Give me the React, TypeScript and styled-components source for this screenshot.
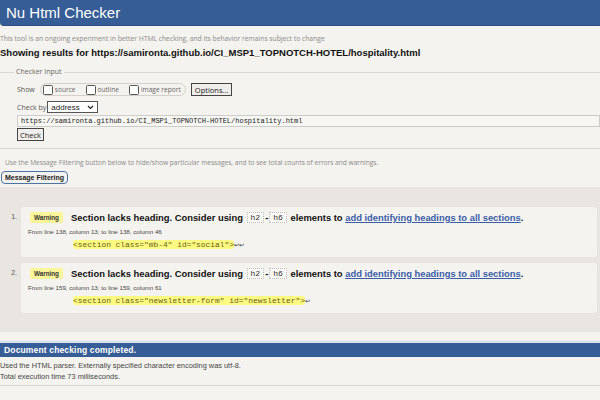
import React from "react";
import styled, { createGlobalStyle } from "styled-components";

const Global = createGlobalStyle`
  html, body { margin: 0; padding: 0; background: #f5f3ef; }
  body { font-family: "Liberation Sans", Arial, sans-serif; color: #222; }
`;

const Page = styled.div`
  width: 600px;
  height: 400px;
  overflow: hidden;
  background: #f5f3ef;
  display: flex;
  flex-direction: column;
`;

const Header = styled.h1`
  margin: 0;
  height: 26px;
  box-sizing: border-box;
  padding-left: 6px;
  background: #365d96;
  border-radius: 0 0 0 4px;
  border-bottom: 1px solid #2d4f82;
  color: #fff;
  font: normal 15px/26px "Liberation Sans", Arial, sans-serif;
`;

const Intro = styled.p`
  margin: 8px 0 0;
  font: 6.75px/10px "Open Sans", sans-serif;
  color: #8a8a8a;
  white-space: nowrap;
`;

const Showing = styled.h2`
  margin: 3px 0 0;
  font: bold 9.5px/12px "Liberation Sans", Arial, sans-serif;
  color: #111;
  white-space: nowrap;
`;

const Fieldset = styled.fieldset`
  margin: 8px 0 0;
  padding: 6px 0 7px 17px;
  border: none;
  border-top: 1px solid #dcd8d1;
  border-bottom: 1px solid #dcd8d1;
  display: flex;
  flex-direction: column;
  font: 7px "Open Sans", sans-serif;
  color: #555;
`;

const Legend = styled.legend`
  padding: 0 2px;
  margin-left: -3px;
  font: 7px/10px "Open Sans", sans-serif;
  color: #666;
`;

const Row = styled.div<{ $mt?: number }>`
  display: flex;
  align-items: center;
  margin-top: ${(p) => p.$mt ?? 0}px;
`;

const Label = styled.span`
  font: 7px "Open Sans", sans-serif;
  color: #555;
  margin-right: 5px;
`;

const Group = styled.span`
  display: flex;
  align-items: center;
  gap: 10px;
  height: 13px;
  box-sizing: border-box;
  padding: 0 4px 0 2px;
  border: 1px solid #d3d0ca;
  border-radius: 7px;
`;

const Check = styled.label`
  display: flex;
  align-items: center;
  gap: 2px;
  font: 6.6px "Open Sans", sans-serif;
  color: #666;
`;

const Box = styled.span`
  width: 8px;
  height: 8px;
  border: 1px solid #555;
  border-radius: 1.5px;
  background: #fff;
`;

const Btn = styled.span<{ $ml?: number }>`
  display: inline-flex;
  align-items: center;
  justify-content: center;
  height: 13px;
  box-sizing: border-box;
  padding: 0 3px;
  margin-left: ${(p) => p.$ml ?? 0}px;
  border: 1.5px solid #444;
  background: #f0eeea;
  font: 7.5px "Open Sans", sans-serif;
  color: #222;
`;

const Select = styled.span`
  display: inline-flex;
  align-items: center;
  justify-content: space-between;
  width: 51px;
  height: 12px;
  box-sizing: border-box;
  padding: 0 3px;
  margin-left: -4px;
  border: 1px solid #555;
  background: #fff;
  font: 8px "Liberation Sans", Arial, sans-serif;
  color: #222;
`;

const UrlInput = styled.input`
  margin-top: 2px;
  height: 12px;
  width: 100%;
  box-sizing: border-box;
  padding: 0 3px;
  border: 1px solid #ccc;
  background: #f7f6f3;
  font: 7px "Liberation Mono", monospace;
  color: #222;
  outline: none;
`;

const SmallBtn = styled(Btn)`
  align-self: flex-start;
  margin-top: 1px;
  border-width: 1px;
  padding: 0 3px;
  width: 27px;
`;

const Hint = styled.p`
  margin: 9px 0 0 5px;
  font: 6.6px/10px "Open Sans", sans-serif;
  color: #8a8a8a;
  white-space: nowrap;
`;

const FilterBtn = styled.span`
  align-self: flex-start;
  margin: 3px 0 0 1px;
  height: 13px;
  width: 67px;
  box-sizing: border-box;
  display: flex;
  align-items: center;
  justify-content: center;
  border: 1.5px solid #4a74a8;
  border-radius: 4px;
  background: #f3f1ed;
  font: bold 7px "Liberation Sans", Arial, sans-serif;
  color: #222;
`;

const Results = styled.ol`
  margin: 3px 0 0;
  padding: 20px 3px 19px 0;
  list-style: none;
  background: #e9e6e1;
  display: flex;
  flex-direction: column;
  gap: 6px;
`;

const Item = styled.li`
  display: flex;
  align-items: flex-start;
`;

const Num = styled.span`
  width: 21px;
  box-sizing: border-box;
  padding: 6px 4px 0 0;
  text-align: right;
  font: 7px "Liberation Sans", Arial, sans-serif;
  color: #555;
`;

const Card = styled.div`
  flex: 1;
  background: #f5f3ef;
  border-radius: 2px;
  box-shadow: 0 0 1px rgba(0, 0, 0, 0.15);
  padding: 3px 0 7px 7px;
  display: flex;
  flex-direction: column;
`;

const Msg = styled.p`
  margin: 0;
  display: flex;
  align-items: center;
  height: 14px;
  font: bold 9.4px "Liberation Sans", Arial, sans-serif;
  color: #111;
  white-space: pre;
`;

const Badge = styled.span`
  margin: 0 8px 0 2px;
  height: 11px;
  width: 33px;
  display: inline-flex;
  align-items: center;
  justify-content: center;
  background: #fbf59a;
  border-radius: 2px;
  font: bold 6.3px "Liberation Sans", Arial, sans-serif;
  color: #333;
`;

const Tag = styled.code`
  font: 8px "Liberation Mono", monospace;
  font-weight: normal;
  color: #333;
  border: 1px dotted #bbb;
  background: #faf9f6;
  padding: 0 3px;
  margin: 0 1px;
`;

const Link = styled.a`
  color: #3a5da8;
  text-decoration: underline;
`;

const Location = styled.p`
  margin: 3px 0 0;
  font: 6.2px/10px "Liberation Sans", Arial, sans-serif;
  color: #444;
`;

const Extract = styled.p`
  margin: 3px 0 0 45px;
  font: 7.9px/10px "Liberation Mono", monospace;
  color: #333;
  white-space: pre;
`;

const Hi = styled.b`
  font-weight: normal;
  background: #fcfa80;
  color: #6b5a1c;
  border-radius: 3px;
`;

const Ret = styled.span`
  font: 6px "DejaVu Sans", sans-serif;
  color: #333;
`;

const Done = styled.h2`
  margin: 10px 0 0;
  height: 15px;
  box-sizing: border-box;
  padding-left: 4px;
  background: #365d96;
  border-top: 1px solid #dfe8f4;
  box-shadow: 0 -1px 0 #cfdcee;
  color: #fff;
  font: bold 8.5px/14px "Liberation Sans", Arial, sans-serif;
  letter-spacing: 0.15px;
`;

const Details = styled.div`
  margin-top: 3px;
  padding-bottom: 3px;
  border-bottom: 1px solid #dcd8d1;
  background: #f4f3ef;
`;

const Note = styled.p`
  margin: 0;
  font: 7.4px/11px "Liberation Sans", Arial, sans-serif;
  color: #444;
`;

const Chevron = () => (
  <svg width="7" height="5" viewBox="0 0 7 5">
    <path d="M1 1l2.5 2.5L6 1" fill="none" stroke="#222" strokeWidth="1.2" />
  </svg>
);

const messages = [
  {
    n: 1,
    loc: "From line 138, column 13; to line 138, column 46",
    code: '<section class="mb-4" id="social">',
    ret: "↩↩",
  },
  {
    n: 2,
    loc: "From line 159, column 13; to line 159, column 61",
    code: '<section class="newsletter-form" id="newsletter">',
    ret: "↩",
  },
];

export default function App() {
  return (
    <Page>
      <Global />
      <Header>Nu Html Checker</Header>
      <Intro>
        This tool is an ongoing experiment in better HTML checking, and its behavior remains subject to change
      </Intro>
      <Showing>
        Showing results for https://samironta.github.io/CI_MSP1_TOPNOTCH-HOTEL/hospitality.html
      </Showing>
      <Fieldset>
        <Legend>Checker Input</Legend>
        <Row>
          <Label>Show</Label>
          <Group>
            <Check>
              <Box /> source
            </Check>
            <Check>
              <Box /> outline
            </Check>
            <Check>
              <Box /> image report
            </Check>
          </Group>
          <Btn $ml={5}>Options...</Btn>
        </Row>
        <Row $mt={5}>
          <Label>Check by</Label>
          <Select>
            address <Chevron />
          </Select>
        </Row>
        <UrlInput readOnly value="https://samironta.github.io/CI_MSP1_TOPNOTCH-HOTEL/hospitality.html" />
        <SmallBtn>Check</SmallBtn>
      </Fieldset>
      <Hint>
        Use the Message Filtering button below to hide/show particular messages, and to see total counts of errors and warnings.
      </Hint>
      <FilterBtn>Message Filtering</FilterBtn>
      <Results>
        {messages.map((m) => (
          <Item key={m.n}>
            <Num>{m.n}.</Num>
            <Card>
              <Msg>
                <Badge>Warning</Badge>
                {"Section lacks heading. Consider using "}
                <Tag>h2</Tag>-<Tag>h6</Tag>
                {" elements to "}
                <Link>add identifying headings to all sections</Link>.
              </Msg>
              <Location>{m.loc}</Location>
              <Extract>
                <Hi>{m.code}</Hi>
                <Ret>{m.ret}</Ret>
              </Extract>
            </Card>
          </Item>
        ))}
      </Results>
      <Done>Document checking completed.</Done>
      <Details>
        <Note>Used the HTML parser. Externally specified character encoding was utf-8.</Note>
        <Note>Total execution time 73 milliseconds.</Note>
      </Details>
    </Page>
  );
}
